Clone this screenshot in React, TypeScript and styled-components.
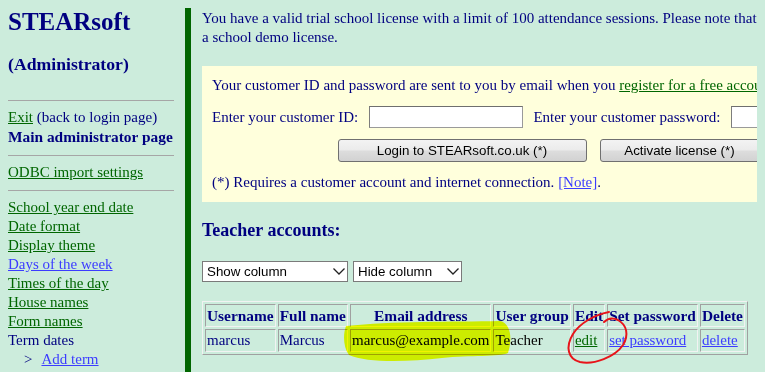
import styled, { createGlobalStyle } from 'styled-components';

const GlobalStyle = createGlobalStyle`
	html {
		overflow: hidden;
	}
	body {
		margin: 8px;
		background: #ccecdc;
		font-family: 'Liberation Serif', 'Times New Roman', serif;
		font-size: 15px;
		color: #000080;
		overflow: hidden;
	}
`;

const Page = styled.div`
	display: flex;
	align-items: stretch;
	width: 930px;
	min-height: 400px;
`;

const Side = styled.div`
	flex: none;
	width: 166px;
	padding-right: 11px;
`;

const Brand = styled.div`
	font-size: 25px;
	font-weight: bold;
	line-height: 28px;
`;

const Role = styled.div`
	margin: 18px 0 25px;
	font-size: 17.7px;
	font-weight: bold;
	line-height: 21px;
`;

const Rule = styled.div`
	margin: 8px 0 7px;
	border-top: 1px solid #a6a6a6;
`;

const Line = styled.div<{ $indent?: boolean }>`
	line-height: 19px;
	white-space: nowrap;
	padding-left: ${(p) => (p.$indent ? '16px' : '0')};
`;

const Strong = styled.b`
	font-size: 15.4px;
`;

const Link = styled.a<{ $visited?: boolean }>`
	color: ${(p) => (p.$visited ? '#006600' : '#3c3cff')};
	text-decoration: underline;
	cursor: pointer;
`;

const Arrow = styled.span`
	margin-right: 9px;
`;

const Main = styled.div`
	flex: none;
	width: 700px;
	border-left: 6px solid #006600;
	padding-left: 11px;
`;

const Notice = styled.p`
	margin: 1px 0 0;
	line-height: 19px;
	white-space: nowrap;
`;

const LicenseBox = styled.div`
	margin-top: 19px;
	width: 673px;
	padding: 10px;
	background: #ffffdc;
	line-height: 19px;
`;

const FieldRow = styled.div`
	display: flex;
	align-items: center;
	justify-content: space-between;
	height: 22px;
	margin-top: 11px;
	white-space: nowrap;
`;

const TextBox = styled.input`
	box-sizing: border-box;
	width: 154px;
	height: 22px;
	margin: 0;
	background: #fff;
	border: 1px solid #9a9a9a;
	border-top-color: #6f6f6f;
	border-left-color: #7d7d7d;
`;

const ButtonRow = styled.div`
	display: flex;
	justify-content: center;
	gap: 13px;
	margin-top: 11px;
`;

const Button = styled.button<{ $w: number }>`
	box-sizing: border-box;
	width: ${(p) => p.$w}px;
	height: 23px;
	padding: 0;
	border: 1px solid #707070;
	border-radius: 3px;
	background: linear-gradient(#f3f3f3 0%, #ebebeb 48%, #dddddd 52%, #d2d2d2 100%);
	font-family: 'Liberation Sans', Arial, sans-serif;
	font-size: 13.33px;
	color: #000;
`;

const Footnote = styled.div`
	margin-top: 11px;
	white-space: nowrap;
`;

const Heading = styled.h3`
	margin: 18px 0 0;
	font-size: 18px;
	line-height: 21px;
	font-weight: bold;
`;

const SelectRow = styled.div`
	display: flex;
	gap: 5px;
	margin-top: 20px;
`;

const SelectWrap = styled.div<{ $w: number }>`
	position: relative;
	width: ${(p) => p.$w}px;
	height: 21px;
`;

const Select = styled.select`
	appearance: none;
	box-sizing: border-box;
	width: 100%;
	height: 100%;
	margin: 0;
	padding: 0 0 0 4px;
	border: 1px solid #7a7a7a;
	border-radius: 0;
	background: #fff;
	font-family: 'Liberation Sans', Arial, sans-serif;
	font-size: 13.33px;
	color: #000;
`;

const Chevron = styled.svg`
	position: absolute;
	right: 3px;
	top: 7px;
	pointer-events: none;
`;

const TableWrap = styled.div`
	position: relative;
	margin-top: 19px;
	width: max-content;
`;

const Table = styled.table`
	border: 1px solid;
	border-color: #f2f2f2 #a0a0a0 #a0a0a0 #f2f2f2;
	border-spacing: 2px;
`;

const Th = styled.th`
	padding: 1px;
	border: 1px solid;
	border-color: #a0a0a0 #f2f2f2 #f2f2f2 #a0a0a0;
	font-size: 15.4px;
	font-weight: bold;
	line-height: 19px;
	white-space: nowrap;
`;

const Td = styled.td<{ $dark?: boolean }>`
	padding: 1px;
	border: 1px solid;
	border-color: #a0a0a0 #f2f2f2 #f2f2f2 #a0a0a0;
	line-height: 19px;
	white-space: nowrap;
	color: ${(p) => (p.$dark ? '#000' : '#000080')};
`;

const Marks = styled.svg`
	position: absolute;
	left: 0;
	top: 0;
	overflow: visible;
	pointer-events: none;
`;

const Highlight = styled.path`
	fill: #ffff00;
	mix-blend-mode: multiply;
`;

function DropDown(props: { label: string; width: number }) {
	return (
		<SelectWrap $w={props.width}>
			<Select defaultValue=''>
				<option value=''>{props.label}</option>
			</Select>
			<Chevron width='12' height='7' viewBox='0 0 12 7'>
				<path d='M0.5 0.5 L6 6 L11.5 0.5' fill='none' stroke='#222' strokeWidth='1.3' />
			</Chevron>
		</SelectWrap>
	);
}

const menu: { label: string; visited: boolean }[] = [
	{ label: 'School year end date', visited: true },
	{ label: 'Date format', visited: true },
	{ label: 'Display theme', visited: true },
	{ label: 'Days of the week', visited: false },
	{ label: 'Times of the day', visited: true },
	{ label: 'House names', visited: true },
	{ label: 'Form names', visited: true },
];

export default function App() {
	return (
		<>
			<GlobalStyle />
			<Page>
				<Side>
					<Brand>STEARsoft</Brand>
					<Role>(Administrator)</Role>
					<Rule />
					<Line>
						<Link $visited>Exit</Link> (back to login page)
					</Line>
					<Line>
						<Strong>Main administrator page</Strong>
					</Line>
					<Rule />
					<Line>
						<Link $visited>ODBC import settings</Link>
					</Line>
					<Rule />
					{menu.map((m) => (
						<Line key={m.label}>
							<Link $visited={m.visited}>{m.label}</Link>
						</Line>
					))}
					<Line>Term dates</Line>
					<Line $indent>
						<Arrow>&gt;</Arrow>
						<Link>Add term</Link>
					</Line>
				</Side>

				<Main>
					<Notice>
						You have a valid trial school license with a limit of 100 attendance sessions. Please note that you
						are using
						<br />a school demo license.
					</Notice>

					<LicenseBox>
						<div style={{ whiteSpace: 'nowrap' }}>
							Your customer ID and password are sent to you by email when you{' '}
							<Link $visited>register for a free account</Link>.
						</div>
						<FieldRow>
							<span>Enter your customer ID:</span>
							<TextBox type='text' />
							<span>Enter your customer password:</span>
							<TextBox type='password' />
						</FieldRow>
						<ButtonRow>
							<Button $w={249}>Login to STEARsoft.co.uk (*)</Button>
							<Button $w={160}>Activate license (*)</Button>
						</ButtonRow>
						<Footnote>
							(*) Requires a customer account and internet connection. <Link>[Note]</Link>.
						</Footnote>
					</LicenseBox>

					<Heading>Teacher accounts:</Heading>

					<SelectRow>
						<DropDown label='Show column' width={146} />
						<DropDown label='Hide column' width={109} />
					</SelectRow>

					<TableWrap>
						<Table>
							<thead>
								<tr>
									<Th>Username</Th>
									<Th>Full name</Th>
									<Th>Email address</Th>
									<Th>User group</Th>
									<Th>Edit</Th>
									<Th>Set password</Th>
									<Th>Delete</Th>
								</tr>
							</thead>
							<tbody>
								<tr>
									<Td>marcus</Td>
									<Td>Marcus</Td>
									<Td $dark>marcus@example.com</Td>
									<Td $dark>Teacher</Td>
									<Td>
										<Link $visited>edit</Link>
									</Td>
									<Td>
										<Link>set password</Link>
									</Td>
									<Td>
										<Link>delete</Link>
									</Td>
								</tr>
							</tbody>
						</Table>
						<Marks width='560' height='70'>
							<Highlight d='M144,25 C190,20 250,21 298,20 C308,22 311,36 306,52 C298,56 268,54 240,57 C205,61 165,62 147,54 C141,46 141,33 144,25 Z' />
							<path
								d='M407,11 C392,14 378,22 371,33 C363,46 366,58 378,61 C392,64 413,56 421,44 C427,34 425,24 416,19 C410,16 405,18 402,21'
								fill='none'
								stroke='#e8141a'
								strokeWidth='2'
								strokeLinecap='round'
							/>
						</Marks>
					</TableWrap>
				</Main>
			</Page>
		</>
	);
}
